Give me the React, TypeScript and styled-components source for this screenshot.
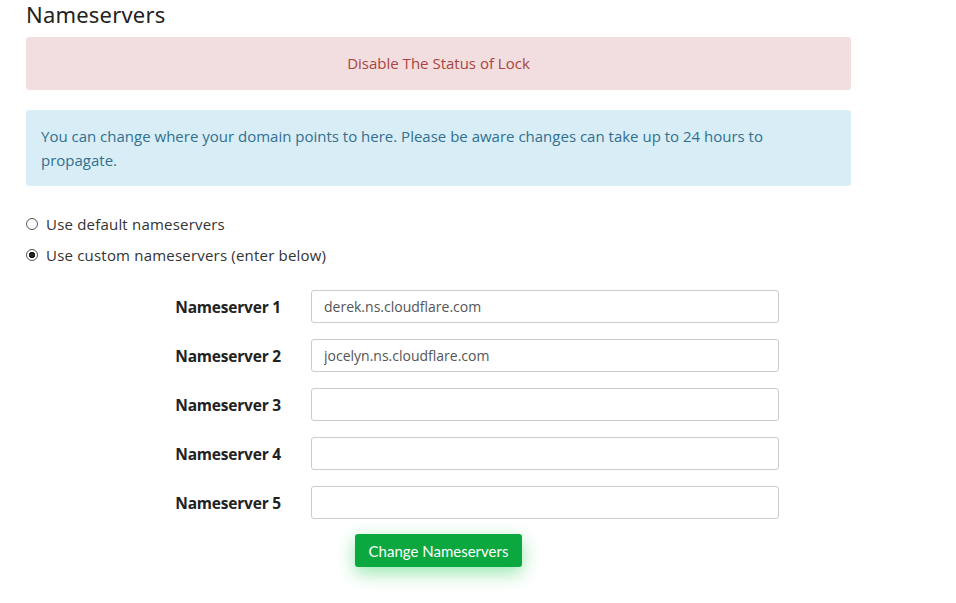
import React, { useState } from "react";
import styled, { createGlobalStyle } from "styled-components";

const GlobalStyle = createGlobalStyle`
  html, body {
    margin: 0;
    padding: 0;
    background: #ffffff;
  }
  body {
    font-family: "Open Sans", "Noto Sans", sans-serif;
    color: #333333;
  }
`;

const servers = [
  "derek.ns.cloudflare.com",
  "jocelyn.ns.cloudflare.com",
  "",
  "",
  "",
];

const App = () => {
  const [mode, setMode] = useState<"default" | "custom">("custom");
  const [values, setValues] = useState<string[]>(servers);

  return (
    <Page>
      <GlobalStyle />
      <Title>Nameservers</Title>
      <Alert $tone="danger">Disable The Status of Lock</Alert>
      <Alert $tone="info">
        You can change where your domain points to here. Please be aware changes
        can take up to 24 hours to propagate.
      </Alert>

      <Options>
        <Option>
          <Radio
            type="radio"
            name="ns"
            checked={mode === "default"}
            onChange={() => setMode("default")}
          />
          Use default nameservers
        </Option>
        <Option>
          <Radio
            type="radio"
            name="ns"
            checked={mode === "custom"}
            onChange={() => setMode("custom")}
          />
          Use custom nameservers (enter below)
        </Option>
      </Options>

      <Form>
        {values.map((value, index) => (
          <React.Fragment key={index}>
            <Label htmlFor={`ns${index + 1}`}>Nameserver {index + 1}</Label>
            <Input
              id={`ns${index + 1}`}
              value={value}
              onChange={(e) => {
                const next = [...values];
                next[index] = e.target.value;
                setValues(next);
              }}
            />
          </React.Fragment>
        ))}
      </Form>

      <Actions>
        <Button type="button">Change Nameservers</Button>
      </Actions>
    </Page>
  );
};

const Page = styled.div`
  width: 825px;
  padding: 1px 0 40px 26px;
  display: flex;
  flex-direction: column;
`;

const Title = styled.h2`
  margin: 0;
  height: 36px;
  font-family: "Noto Sans", sans-serif;
  font-weight: 400;
  font-size: 22px;
  line-height: 26px;
  letter-spacing: 0.2px;
  color: #222222;
`;

const Alert = styled.div<{ $tone: "danger" | "info" }>`
  box-sizing: border-box;
  border-radius: 3px;
  font-size: 15px;
  line-height: 24px;
  margin-bottom: 20px;
  ${({ $tone }) =>
    $tone === "danger"
      ? `
    background: #f2dede;
    color: #a94442;
    text-align: center;
    padding: 14px 15px 15px;
  `
      : `
    background: #d9edf7;
    color: #31708f;
    padding: 14px 15px;
    margin-bottom: 26px;
  `}
`;

const Options = styled.div`
  display: flex;
  flex-direction: column;
  gap: 7px;
  margin-bottom: 23px;
`;

const Option = styled.label`
  display: flex;
  align-items: center;
  gap: 8px;
  font-size: 15px;
  line-height: 24px;
  letter-spacing: 0.2px;
  color: #333333;
`;

const Radio = styled.input`
  appearance: none;
  margin: 0;
  width: 12px;
  height: 12px;
  border: 1px solid #555555;
  border-radius: 50%;
  background: #ffffff;
  box-sizing: border-box;

  &:checked {
    background: radial-gradient(circle, #222222 0 3px, #ffffff 3.5px);
  }
`;

const Form = styled.div`
  display: grid;
  grid-template-columns: 255px 468px;
  column-gap: 30px;
  row-gap: 16px;
  align-items: center;
`;

const Label = styled.label`
  text-align: right;
  font-family: "Open Sans", sans-serif;
  font-weight: 700;
  font-size: 15.5px;
  letter-spacing: -0.2px;
  color: #222222;
`;

const Input = styled.input`
  box-sizing: border-box;
  height: 33px;
  padding: 0 12px;
  border: 1px solid #cccccc;
  border-radius: 3px;
  font-family: "Open Sans", sans-serif;
  font-size: 14px;
  color: #555555;
  outline: none;
`;

const Actions = styled.div`
  display: flex;
  justify-content: center;
  padding-top: 15px;
`;

const Button = styled.button`
  height: 33px;
  padding: 0 14px;
  border: none;
  border-radius: 3px;
  background: #0aa83f;
  color: #ffffff;
  font-family: "Lato", sans-serif;
  font-size: 15px;
  box-shadow: 0 6px 18px rgba(20, 200, 70, 0.45);
  cursor: pointer;
`;

export default App;
